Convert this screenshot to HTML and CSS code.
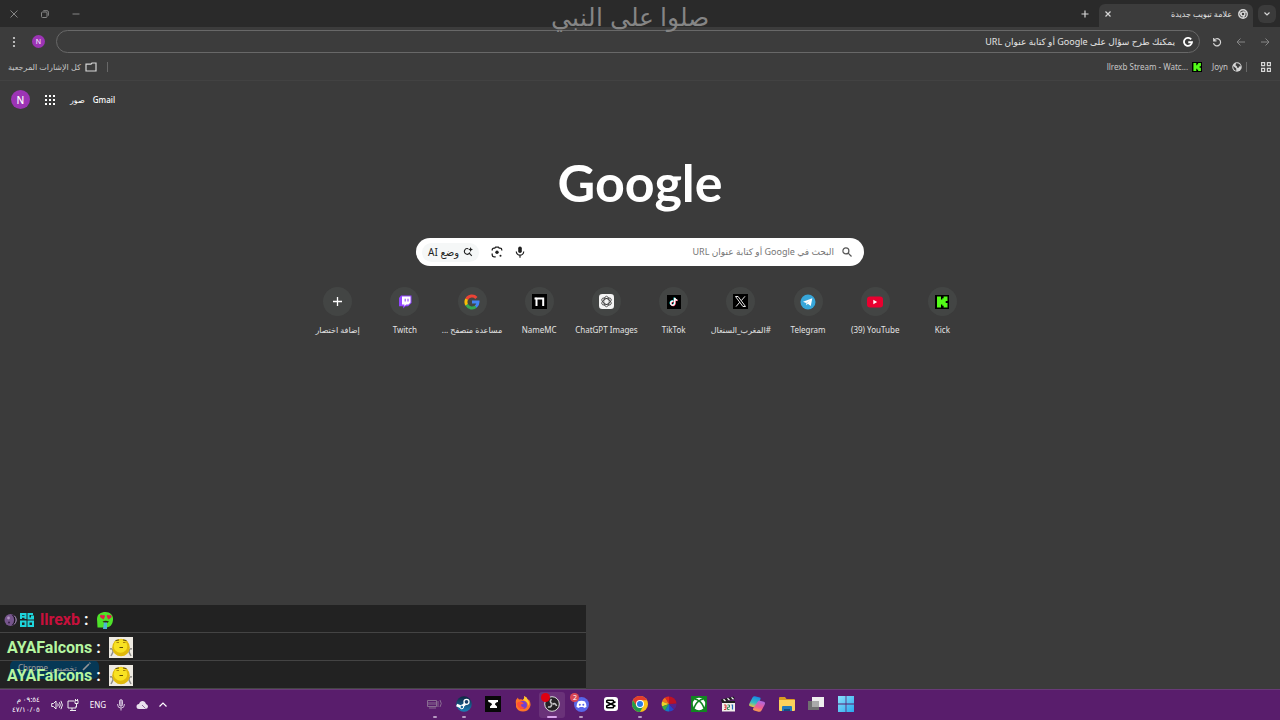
FILE: index.html
```
<!DOCTYPE html>
<html lang="ar" dir="rtl">
<head>
    <meta charset="utf-8">
    <title>علامة تبويب جديدة</title>
    <link rel="stylesheet" href="styles.css">
</head>
<body>
    <!-- Tab strip -->
    <header class="tab-strip">
        <button class="tab-search" aria-label="البحث في علامات التبويب">
            <svg width="8" height="8" viewBox="0 0 8 8" class="line"><path d="M1.5 2.5 4 5l2.5-2.5"/></svg>
        </button>
        <div class="tab">
            <svg width="10" height="10" viewBox="0 0 20 20" fill="none" stroke="#d6d6d6" stroke-width="2.8"><circle cx="10" cy="10" r="8.5"/><circle cx="10" cy="10" r="3.8"/><path d="M10 6.2h8M6.7 12 2.6 5.5M13.3 12 9.5 18.5"/></svg>
            <span class="tab-title">علامة تبويب جديدة</span>
            <button class="tab-close" aria-label="إغلاق">
                <svg width="8" height="8" viewBox="0 0 8 8" class="line"><path d="M1.5 1.5l5 5M6.5 1.5l-5 5"/></svg>
            </button>
        </div>
        <button class="new-tab" aria-label="علامة تبويب جديدة">
            <svg width="8" height="8" viewBox="0 0 8 8" class="line"><path d="M4 .5v7M.5 4h7"/></svg>
        </button>
        <div class="window-controls">
            <button aria-label="تصغير"><svg width="8" height="8" viewBox="0 0 8 8" class="line dim"><path d="M.5 4h7"/></svg></button>
            <button aria-label="استعادة"><svg width="8" height="8" viewBox="0 0 8 8" class="line dim"><rect x=".5" y="2" width="5.5" height="5.5" rx="1"/><path d="M2.3 .7h3.7q1.4 0 1.4 1.4v3.6"/></svg></button>
            <button aria-label="إغلاق النافذة"><svg width="8" height="8" viewBox="0 0 8 8" class="line dim"><path d="M.5 .5l7 7M7.5 .5l-7 7"/></svg></button>
        </div>
    </header>

    <!-- Toolbar -->
    <nav class="toolbar">
        <button class="tool" aria-label="التالي"><svg width="10" height="10" viewBox="0 0 10 10" class="line dim"><path d="M1 5h8M5.5 1.5 9 5 5.5 8.5"/></svg></button>
        <button class="tool" aria-label="السابق"><svg width="10" height="10" viewBox="0 0 10 10" class="line dim"><path d="M9 5H1M4.5 1.5 1 5l3.5 3.5"/></svg></button>
        <button class="tool" aria-label="إعادة التحميل"><svg width="10" height="10" viewBox="0 0 10 10" class="line"><path d="M1.7 1v2.8h2.8M1.8 3.6A3.6 3.6 0 1 1 1.5 6.2"/></svg></button>
        <div class="omnibox">
            <svg width="10" height="10" viewBox="0 0 20 20" fill="none" stroke="#fff" stroke-width="3.6"><path d="M16.3 4.8A8 8 0 1 0 18 10.5h-7.5"/></svg>
            <input type="text" aria-label="شريط العناوين" placeholder="يمكنك طرح سؤال على Google أو كتابة عنوان URL">
        </div>
        <button class="avatar avatar-small" aria-label="الملف الشخصي">N</button>
        <button class="tool" aria-label="القائمة"><svg width="4" height="12" viewBox="0 0 4 12" fill="#d6d6d6"><circle cx="2" cy="2" r="1.1"/><circle cx="2" cy="6" r="1.1"/><circle cx="2" cy="10" r="1.1"/></svg></button>
    </nav>

    <!-- Bookmarks bar -->
    <nav class="bookmarks">
        <button class="tool" aria-label="التطبيقات"><svg width="10" height="10" viewBox="0 0 10 10" class="line"><path d="M.6.6h3v3h-3zM6.4.6h3v3h-3zM.6 6.4h3v3h-3zM6.4 6.4h3v3h-3z"/></svg></button>
        <span class="divider"></span>
        <a href="#" class="bookmark">
            <svg width="10" height="10" viewBox="0 0 20 20"><circle cx="10" cy="10" r="9.5" fill="#d6d6d6"/><path d="M2.5 8l6 5v4.8C4.5 17 2 13.5 2.5 8zM8 2.5c5-1 9 2 9.7 6l-3.7.5-1 3-3-1-.5-3L7 7z" fill="#3c3c3c"/></svg>
            Joyn
        </a>
        <a href="#" class="bookmark">
            <svg width="10" height="10" viewBox="0 0 14 14"><path fill="#000" d="M0 0h14v14H0z"/><path fill="#53fc18" d="M2 1.500h4v3h1.300V3.200h1.300V1.500H12.500v4.500h-1.800v2h1.800v4.500H8.600v-1.700H7.300V9.500H6v3H2z"/></svg>
            <bdi>llrexb Stream - Watc...</bdi>
        </a>
        <span class="spacer"></span>
        <span class="divider"></span>
        <button class="bookmark all-bookmarks">
            <svg width="12" height="10" viewBox="0 0 12 10" class="line"><path d="M1 2.2h5l1-1.2h4v8H1z"/></svg>
            كل الإشارات المرجعية
        </button>
    </nav>

    <main class="ntp">
        <div class="ntp-links">
            <a href="#">Gmail</a>
            <a href="#">صور</a>
            <button class="tool" aria-label="تطبيقات Google"><svg width="10" height="10" viewBox="0 0 10 10" fill="#fff"><path d="M0 0h2v2H0zM4 0h2v2H4zM8 0h2v2H8zM0 4h2v2H0zM4 4h2v2H4zM8 4h2v2H8zM0 8h2v2H0zM4 8h2v2H4zM8 8h2v2H8z"/></svg></button>
            <button class="avatar" aria-label="حساب Google">N</button>
        </div>

        <h1 class="logo">Google</h1>

        <form class="search" action="javascript:void(0);">
            <svg width="10" height="10" viewBox="0 0 10 10" fill="none" stroke="#555" stroke-width="1.2"><circle cx="3.9" cy="3.9" r="3"/><path d="M6.2 6.2 9.5 9.5"/></svg>
            <input type="text" aria-label="البحث" placeholder="البحث في Google أو كتابة عنوان URL">
            <button aria-label="البحث الصوتي"><svg width="10" height="12" viewBox="0 0 10 12"><rect x="3.2" y=".5" width="3.6" height="6.5" rx="1.8" fill="#1f1f1f"/><path d="M1.3 5.5a3.7 3.7 0 0 0 7.4 0M5 9.2v2.6" fill="none" stroke="#1f1f1f" stroke-width="1.2"/></svg></button>
            <button aria-label="البحث بالصور"><svg width="12" height="12" viewBox="0 0 12 12" fill="none" stroke="#1f1f1f" stroke-width="1.3"><path d="M1.2 4.5V4q0-1.8 1.8-1.8h.8l.8-1h2.8l.8 1H9q1.8 0 1.8 1.800v.5M1.2 7.5V9q0 1.8 1.8 1.8h1.7"/><circle cx="6" cy="6.3" r="1.7" fill="#1f1f1f" stroke="none"/><circle cx="9.5" cy="9.8" r="1" fill="#1f1f1f" stroke="none"/></svg></button>
            <button class="ai-mode">
                <svg width="10" height="10" viewBox="0 0 10 10" fill="none" stroke="#1f1f1f" stroke-width="1.1"><path d="M5.3 1.8A2.8 2.8 0 1 0 6.8 5.6M6.2 6.2 8.8 8.8"/><path d="M7.6 0l.7 1.8 1.7.7-1.7.7-.7 1.8-.7-1.8-1.700-.7 1.700-.7z" fill="#1f1f1f" stroke="none"/></svg>
                وضع AI
            </button>
        </form>

        <div class="shortcuts">
            <a href="#" class="shortcut">
                <span class="circle"><svg width="14" height="14" viewBox="0 0 14 14"><path fill="#000" d="M0 0h14v14H0z"/><path fill="#53fc18" d="M2 1.500h4v3h1.300V3.200h1.300V1.500H12.500v4.500h-1.800v2h1.800v4.500H8.600v-1.700H7.300V9.500H6v3H2z"/></svg></span>
                <bdi>Kick</bdi>
            </a>
            <a href="#" class="shortcut">
                <span class="circle"><svg width="16" height="12" viewBox="0 0 16 12"><rect y=".5" width="16" height="11" rx="3" fill="#e9002f"/><path d="M6.3 3.7v4.6L10.2 6z" fill="#fff"/></svg></span>
                <bdi>(39) YouTube</bdi>
            </a>
            <a href="#" class="shortcut">
                <span class="circle"><svg width="16" height="16" viewBox="0 0 16 16"><circle cx="8" cy="8" r="7.5" fill="#37a6d9"/><path d="M3 7.8 12.3 4.2 10.8 12 7.8 9.8 6.4 11.2 6 8.9z" fill="#fff"/><path d="M6 8.9 10.5 5.9 7.1 9.3 6.4 11.2z" fill="#b8d9ea"/></svg></span>
                <bdi>Telegram</bdi>
            </a>
            <a href="#" class="shortcut">
                <span class="circle"><svg width="15" height="15" viewBox="0 0 15 15"><path fill="#000" d="M0 0h15v15H0z"/><path d="M2.5 2.5h2.6l7.4 10H9.9zM12 2.3 8.3 6.6M6.7 8.3 3 12.6" fill="none" stroke="#fff" stroke-width=".9"/></svg></span>
                <bdi>#المغرب_السنغال</bdi>
            </a>
            <a href="#" class="shortcut">
                <span class="circle"><svg width="14" height="14" viewBox="0 0 14 14"><path fill="#000" d="M0 0h14v14H0z"/><g fill="none" stroke-width="1.4"><path d="M6.4 6.3a2 2 0 1 0 1.3 2V2.9q.4 2 2.6 2.3" stroke="#25f4ee" transform="translate(-.5 -.3)"/><path d="M6.4 6.3a2 2 0 1 0 1.3 2V2.9q.4 2 2.6 2.3" stroke="#fe2c55" transform="translate(.4 .4)"/><path d="M6.4 6.3a2 2 0 1 0 1.3 2V2.9q.4 2 2.6 2.3" stroke="#fff"/></g></svg></span>
                <bdi>TikTok</bdi>
            </a>
            <a href="#" class="shortcut">
                <span class="circle"><svg width="15" height="15" viewBox="0 0 16 16"><rect width="16" height="16" rx="3.5" fill="#f4f4f4"/><g fill="none" stroke="#333" stroke-width=".8"><ellipse cx="8" cy="8" rx="2.9" ry="5.6"/><ellipse cx="8" cy="8" rx="2.9" ry="5.6" transform="rotate(60 8 8)"/><ellipse cx="8" cy="8" rx="2.9" ry="5.6" transform="rotate(120 8 8)"/></g></svg></span>
                <bdi>ChatGPT Images</bdi>
            </a>
            <a href="#" class="shortcut">
                <span class="circle"><svg width="15" height="15" viewBox="0 0 15 15"><path fill="#000" d="M0 0h15v15H0z"/><path d="M4.500 12V4.500H11.200v7.500" fill="none" stroke="#fff" stroke-width="2"/><path fill="#fff" d="M2.500 3.500h2v2h-2z"/></svg></span>
                <bdi>NameMC</bdi>
            </a>
            <a href="#" class="shortcut">
                <span class="circle"><svg width="16" height="16" viewBox="0 0 16 16" fill="none" stroke-width="3"><path d="M2.7 5.2A6 6 0 0 1 12.4 4" stroke="#ea4335"/><path d="M2.8 11A6 6 0 0 1 2.7 5.1" stroke="#fbbc05"/><path d="M12 12.5A6 6 0 0 1 2.7 10.8" stroke="#34a853"/><path d="M8 8h6a6 6 0 0 1-2.2 4.6" stroke="#4285f4"/></svg></span>
                <bdi>مساعدة متصفح ...</bdi>
            </a>
            <a href="#" class="shortcut">
                <span class="circle"><svg width="14" height="14" viewBox="0 0 14 14"><path d="M3 .5h10.5V8L10 11.2H7.5L5.2 13.5v-2.3H1V3z" fill="#9146ff"/><path d="M4 1.5h8.5v6l-2 2H8.2L6.4 11.2V9.5H4z" fill="#fff"/><path d="M7.2 3.8v2.7M10 3.8v2.7" stroke="#9146ff" stroke-width="1.1"/></svg></span>
                <bdi>Twitch</bdi>
            </a>
            <button class="shortcut">
                <span class="circle"><svg width="9" height="9" viewBox="0 0 9 9" fill="none" stroke="#fff" stroke-width="1.3"><path d="M4.5 0v9M0 4.5h9"/></svg></span>
                <bdi>إضافة اختصار</bdi>
            </button>
        </div>

        <button class="customize">
            <svg width="9" height="9" viewBox="0 0 9 9" fill="none" stroke="#fff" stroke-width="1.6"><path d="M1 8 7 2M7.5 1.5 8.3.7"/></svg>
            تخصيص Chrome
        </button>
    </main>

    <!-- Stream overlays -->
    <p class="banner">صلوا على النبي</p>

    <section class="chat" dir="ltr">
        <div class="chat-row">
            <span class="badges">
                <svg width="13" height="14" viewBox="0 0 13 14"><circle cx="6.5" cy="7" r="6" fill="#76558c"/><path d="M7.5 1.5a5.7 5.7 0 0 1 0 11 7 7 0 0 0 0-11z" fill="#19131f"/><path d="M10.500 3a5.500 5.500 0 0 1 0 8" fill="none" stroke="#9d8cac"/><circle cx="4.5" cy="5" r="1.4" fill="#b295c4"/><circle cx="5" cy="9.5" r="1" fill="#392148"/></svg>
                <svg width="14" height="14" viewBox="0 0 14 14" fill="none" stroke="#1ed5dc" stroke-width="2"><path d="M1 6V1h4.5v5M1 3.8h4.5M13 1H8.5v4.5H13V3.5h-2M1 8.5h4.5V13H1zM8.5 8.5H13V13H8.5z"/></svg>
            </span>
            <span class="user user-red">llrexb</span><span class="colon">:</span>
            <svg width="18" height="18" viewBox="0 0 18 18"><path d="M1 8C1 3 5 1 9.5 1S17.5 4 17 9s-3 7.5-8 7.5H1.5z" fill="#4fe32a"/><path d="M7 4.5C5 2.5 3 5 4.5 6.5L7.5 8.5 9 5.5C8.7 3.8 7.5 3.8 7 4.5zM13 4.5C12 3 10.5 3.8 10.8 5.5L12.3 8.5l3-2C16.5 4.5 14.3 3 13 4.5z" fill="#e21d4b"/><path d="M6.5 10.5q3-1.5 6.5 0-3 3-6.5 0z" fill="#302a18"/><path d="M8 11.5h3V18H7z" fill="#4ab6d5"/></svg>
        </div>
        <div class="chat-row">
            <span class="user user-green">AYAFalcons</span><span class="colon">:</span>
            <svg width="24" height="21" viewBox="0 0 24 21"><path fill="#eeeae2" d="M0 0h24v21H0z"/><path d="M1 12q3-1 3 3l-2 4M23 12q-3-1-3 3l2 4" fill="none" stroke="#8f8d8a" stroke-width="1.5"/><circle cx="12" cy="10.5" r="8.8" fill="#e0b90b"/><circle cx="11.5" cy="9" r="6.8" fill="#f8e222"/><path d="M6.5 3.5 10 3M14 3l3.5.5M10.500 10.5h3.5" fill="none" stroke="#5c4908" stroke-width="1.2"/><path d="M7.5 5.500h2.5M14 5.500h2.5" stroke="#a9850b"/></svg>
        </div>
        <div class="chat-row">
            <span class="user user-green">AYAFalcons</span><span class="colon">:</span>
            <svg width="24" height="21" viewBox="0 0 24 21"><path fill="#eeeae2" d="M0 0h24v21H0z"/><path d="M1 12q3-1 3 3l-2 4M23 12q-3-1-3 3l2 4" fill="none" stroke="#8f8d8a" stroke-width="1.5"/><circle cx="12" cy="10.5" r="8.8" fill="#e0b90b"/><circle cx="11.5" cy="9" r="6.8" fill="#f8e222"/><path d="M6.5 3.5 10 3M14 3l3.5.5M10.500 10.5h3.5" fill="none" stroke="#5c4908" stroke-width="1.2"/><path d="M7.5 5.500h2.5M14 5.500h2.5" stroke="#a9850b"/></svg>
        </div>
    </section>

    <!-- Taskbar -->
    <footer class="taskbar">
        <div class="apps">
            <button class="app" aria-label="ابدأ"><svg viewBox="0 0 16 16"><defs><linearGradient id="win" x2="1" y2="1"><stop stop-color="#8be0fb"/><stop offset="1" stop-color="#2ba8ee"/></linearGradient></defs><path fill="url(#win)" d="M0 0h7.6v7.6H0zM8.4 0H16v7.6H8.4zM0 8.4h7.6V16H0zM8.4 8.4H16V16H8.4z"/></svg></button>
            <button class="app" aria-label="عرض المهام"><svg viewBox="0 0 16 16"><path fill="#eee" d="M4 1h12v10H4z"/><path fill="#707070" d="M0 5h11v9H0z"/><path fill="#aaa" d="M4 5h7v6H4z"/></svg></button>
            <button class="app" aria-label="مستكشف الملفات"><svg viewBox="0 0 16 16"><path fill="#d99c22" d="M0 2q0-1 1-1h5l1.5 2H15q1 0 1 1v5H0z"/><path fill="#fbd15c" d="M0 4h16v10q0 1-1 1H1q-1 0-1-1z"/><path fill="#2079bd" d="M3 15v-4q0-1 1-1h8q1 0 1 1v4z"/><path fill="#134c80" d="M5 13h6v2H5z"/></svg></button>
            <button class="app" aria-label="Copilot"><svg viewBox="0 0 16 16"><defs><linearGradient id="cop1" y2="1" x2="0"><stop stop-color="#1689e4"/><stop offset=".6" stop-color="#38bcc0"/><stop offset="1" stop-color="#e9c63e"/></linearGradient><linearGradient id="cop2" y2="1" x2="0"><stop stop-color="#aa68e3"/><stop offset=".6" stop-color="#ef5b93"/><stop offset="1" stop-color="#f8a14c"/></linearGradient></defs><g transform="rotate(15 8 8)"><path fill="url(#cop1)" d="M4 1h5q1.5 0 1 2L8 10q-.5 2-2.5 2H2Q0 12 .7 9L2 3q.5-2 2-2z"/><path fill="url(#cop2)" d="M10 4h4q2 0 1.5 3L14 13q-.5 2-2.5 2H7q-2 0-1.5-2L8 6q.6-2 2-2z"/></g></svg></button>
            <button class="app" aria-label="مشغل الوسائط"><svg viewBox="0 0 16 16"><path fill="#f1eee9" d="M2 6h13v9.5H2z"/><path fill="#202020" d="M1 3.5 14 .5l.6 2.5L1.6 6zM2 5h13v2H2z"/><path d="M3.5 3.2l2 1.8M7.5 2.3l2 1.8M11.5 1.4l2 1.8" stroke="#fff" stroke-width="1.2"/><path d="M4 9h2v4.5H4M6 11.2H4.5" stroke="#d53838" fill="none"/><path d="M7.5 9h2v2.2h-2v2.3h2" stroke="#338b5a" fill="none"/><path d="M11.5 9h1v4.5" stroke="#2468bc" stroke-width="1.2" fill="none"/></svg></button>
            <button class="app" aria-label="Xbox"><svg viewBox="0 0 16 16"><path fill="#128521" d="M0 0h16v16H0z"/><circle cx="8" cy="8" r="6.2" fill="#fff"/><path d="M3.5 3.5Q5.5 2.5 8 5q2.5-2.5 4.5-1.5M8 5C6 6 3.5 9.5 3.2 12.5M8 5c2 1 4.5 4.5 4.8 7.5" stroke="#128521" stroke-width="1.5" fill="none"/></svg></button>
            <button class="app" aria-label="الألوان"><svg viewBox="0 0 16 16"><path fill="#e42920" d="M8 8 4 1.5A7.5 7.5 0 0 1 8 .5z"/><path fill="#f47419" d="M8 8 1 5.5A7.5 7.5 0 0 1 4 1.5z"/><path fill="#ecd127" d="M8 8 1 10.5A7.5 7.5 0 0 1 1 5.5z"/><path fill="#38ab44" d="M8 8 4 14.5A7.5 7.5 0 0 1 1 10.5z"/><path fill="#147cc0" d="M8 8v7.5a7.5 7.5 0 0 1-4-1z"/><path fill="#2545c9" d="M8 8l5 5.5a7.5 7.5 0 0 1-5 2z"/><path fill="#57238c" d="M8 8l7.5-.5A7.5 7.5 0 0 1 13 13.5z"/><path fill="#bc1226" d="M8 8V.5a7.5 7.5 0 0 1 7.5 7z"/></svg></button>
            <button class="app running" aria-label="Google Chrome"><svg viewBox="0 0 16 16"><circle cx="8" cy="8" r="8" fill="#fbc116"/><path fill="#e33b2e" d="M1 4.2A8 8 0 0 1 15 4.2H8L4.7 10z"/><path fill="#24994a" d="M1 4.2 4.6 10 8 11.5 11.3 10 8 16A8 8 0 0 1 1 4.2z"/><circle cx="8" cy="8" r="4" fill="#fff"/><circle cx="8" cy="8" r="3" fill="#287be8"/></svg></button>
            <button class="app" aria-label="CapCut"><svg viewBox="0 0 16 16"><rect x="1" y="1" width="14" height="14" rx="3" fill="#fff"/><path d="M10.5 6V5q0-.8-.8-.8H4.5q-.8 0-.8.8v1L12.5 10.2M10.5 10v1q0 .8-.8.8H4.5q-.8 0-.8-.8v-1L12.5 5.8" stroke="#000" stroke-width="1.5" fill="none"/></svg></button>
            <button class="app running" aria-label="Discord"><svg viewBox="0 0 16 16"><circle cx="8.5" cy="8.5" r="7.5" fill="#5865e9"/><path d="M5 5.5q3.5-1.5 7 0 1.7 2.5 1.5 5.5l-2.5 1-.7-1H6.7l-.7 1-2.5-1Q3.5 8 5 5.5z" fill="#fff"/><circle cx="6.8" cy="8.8" r="1" fill="#5865e9"/><circle cx="10.3" cy="8.8" r="1" fill="#5865e9"/></svg><span class="count">2</span></button>
            <button class="app running active" aria-label="OBS Studio"><svg viewBox="0 0 16 16"><circle cx="8" cy="8" r="7.3" fill="#242125" stroke="#ddd" stroke-width="1"/><g fill="none" stroke="#c6c4c8" stroke-width="1.6"><path d="M8 7.5Q5 6 7.5 3"/><path d="M8 7.5Q5 6 7.5 3" transform="rotate(120 8 8)"/><path d="M8 7.5Q5 6 7.5 3" transform="rotate(240 8 8)"/></g></svg><span class="rec"></span></button>
            <button class="app" aria-label="Firefox"><svg viewBox="0 0 16 16"><path fill="#ff7426" d="M1 8Q0 4 3 1.5q0 2 1.5 2Q7 3 8 4q2-1.5 1-4 3 1 4 4l1-.5Q16.5 8 15 11q-2 4.5-7 4.5T1 11z"/><path fill="#ffc62d" d="M9 0q3 1 4 4 2 3 1 6-2-5-6-6 2-1.5 1-4z"/><circle cx="8" cy="9" r="4" fill="#7342cf"/><path fill="#ff4e38" d="M2 7q2-2 5-1l2 1.5-3 1q0 3 3.5 3Q8 14 5 12.5 2 11 2 7z"/></svg></button>
            <button class="app" aria-label="Anvil"><svg viewBox="0 0 16 16"><path fill="#080808" d="M0 0h16v16H0z"/><path fill="#fff" d="M3 4h10v2q-3 .5-3 2.5l2 2V12H5v-1.5l2-2Q7 7 3.5 6z"/></svg></button>
            <button class="app running" aria-label="Steam"><svg viewBox="0 0 16 16"><defs><linearGradient id="steam" x2="0" y2="1"><stop stop-color="#102540"/><stop offset="1" stop-color="#1b7fb8"/></linearGradient></defs><circle cx="8" cy="8" r="7.8" fill="url(#steam)"/><path d="M.6 9 5.500 11 10 7" stroke="#fff" stroke-width="2.8" fill="none"/><circle cx="10.5" cy="5.800" r="2.5" fill="#17406a" stroke="#fff" stroke-width="1.3"/><circle cx="5.8" cy="11" r="1.800" fill="#1b6a9e" stroke="#fff"/></svg></button>
            <button class="app running" aria-label="الصوت"><svg viewBox="0 0 16 16" fill="none" stroke="#8f7596" stroke-width=".9"><path d="M.5 4.5h9v6h-9zM2 6v3M4 6v3M6 6v3M8 6v3M11 5v6M13 4q2.5 3.5 0 7M2 12h7"/></svg></button>
        </div>
        <div class="tray">
            <button aria-label="الرموز المخفية"><svg width="8" height="8" viewBox="0 0 8 8" fill="none" stroke="#fff" stroke-width="1.2"><path d="M.5 5.5 4 2l3.5 3.5"/></svg></button>
            <button aria-label="OneDrive"><svg width="12" height="10" viewBox="0 0 12 10"><path d="M3 9Q.5 9 .5 6.5T3 4Q4 1 6.5 1T10 4q2 .5 2 2.5T9.5 9z" fill="#e9e2ed"/><path d="M6 5 9.5 8.5" stroke="#8e6e9b"/></svg></button>
            <button aria-label="ميكروفون"><svg width="8" height="12" viewBox="0 0 8 12" fill="none" stroke="#d5c5dc"><rect x="2.5" y=".7" width="3" height="6.5" rx="1.5" fill="#a98bb6"/><path d="M.7 5v1q0 3 3.3 3t3.3-3V5M4 9v2.5"/></svg></button>
            <button class="language">ENG</button>
            <button class="status" aria-label="الشبكة والصوت">
                <svg width="12" height="12" viewBox="0 0 12 12" fill="none" stroke="#eee"><path d="M7 2H1v7h8V7M3 11.5h6M5 9v2.5M8 1.5h3v3H8zM9.5 4.5V8M8.5 0v1.5M10.5 0v1.5"/></svg>
                <svg width="12" height="10" viewBox="0 0 12 10" fill="none" stroke="#eee"><path d="M.7 3.5h1.8L5 1v8L2.5 6.5H.7zM6.7 3.5q1 1.5 0 3M8.3 2.2q2 2.8 0 5.6M9.9.8q3 4.2 0 8.4"/></svg>
            </button>
            <time class="clock">٠٩:٥٤ م<br>٤٧/١٠/٠٥</time>
        </div>
    </footer>
</body>
</html>
```
FILE: styles.css
```
* {
    box-sizing: border-box;
}

body {
    display: flex;
    flex-direction: column;
    min-height: 100vh;
    margin: 0;
    background: #3b3b3b;
    color: #e3e3e3;
    font: 8px/12px "Noto Sans", "DejaVu Sans", sans-serif;
}

button,
input {
    padding: 0;
    border: 0;
    background: none;
    color: inherit;
    font: inherit;
}

input:focus {
    outline: none;
}

a {
    color: inherit;
    text-decoration: none;
}

svg {
    display: block;
    flex: none;
}

.line {
    fill: none;
    stroke: #d6d6d6;
    stroke-width: 1.2;
}

.dim {
    stroke: #858585;
    stroke-width: 1;
}

.spacer {
    flex: 1;
}

.divider {
    width: 1px;
    height: 10px;
    background: #686868;
}

.tool {
    display: flex;
    align-items: center;
    justify-content: center;
    width: 12px;
    height: 12px;
}

/* Tab strip */
.tab-strip {
    display: flex;
    align-items: center;
    height: 27px;
    padding: 0 4px;
    background: #2a2a2a;
}

.tab-search {
    display: flex;
    align-items: center;
    justify-content: center;
    width: 18px;
    height: 18px;
    border-radius: 6px;
    background: #3b3b3b;
}

.tab {
    display: flex;
    align-items: center;
    align-self: flex-end;
    gap: 6px;
    width: 154px;
    height: 23px;
    margin-right: 5px;
    padding: 0 5px 4px;
    border-radius: 6px 6px 0 0;
    background: #3c3c3c;
}

.tab-title {
    flex: 1;
}

.new-tab {
    margin-right: 10px;
}

.window-controls {
    display: flex;
    gap: 23px;
    margin-right: auto;
    padding-left: 6px;
}

/* Toolbar */
.toolbar {
    display: flex;
    align-items: center;
    gap: 12px;
    height: 29px;
    padding: 0 9px 0 8px;
    background: #3c3c3c;
}

.omnibox {
    display: flex;
    flex: 1;
    align-items: center;
    gap: 8px;
    height: 23px;
    margin: 0 -1px;
    padding: 0 6px;
    border: 1px solid #686868;
    border-radius: 12px;
}

.omnibox input {
    flex: 1;
    font-size: 9px;
}

.omnibox input::placeholder {
    color: #e3e3e3;
}

.avatar {
    width: 19px;
    height: 19px;
    border-radius: 50%;
    background: #9c34b5;
    color: #fff;
    font-size: 10px;
}

.avatar-small {
    width: 13px;
    height: 13px;
    font-size: 7px;
    line-height: 13px;
}

/* Bookmarks bar */
.bookmarks {
    display: flex;
    align-items: center;
    gap: 10px;
    height: 25px;
    padding: 0 8px 3px;
    border-bottom: 1px solid #424242;
    background: #3c3c3c;
}

.bookmarks .tool + .divider {
    margin: 0 3px 0 -6px;
}

.bookmark {
    display: flex;
    align-items: center;
    gap: 4px;
    color: #c7c7c7;
}

/* New tab page */
.ntp {
    position: relative;
    display: flex;
    flex: 1;
    flex-direction: column;
    align-items: center;
}

.ntp-links {
    display: flex;
    align-items: center;
    align-self: flex-end;
    gap: 8px;
    height: 19px;
    margin-top: 9px;
    padding-left: 11px;
    color: #fff;
    font-weight: 500;
}

.ntp-links .tool {
    margin: 0 6px;
}

.logo {
    margin: 37px 0 0;
    color: #fff;
    font: 700 52px/72px Lato, sans-serif;
}

.search {
    display: flex;
    align-items: center;
    gap: 12px;
    width: 448px;
    max-width: 100%;
    height: 28px;
    margin-top: 20px;
    padding: 0 12px 0 6px;
    border-radius: 14px;
    background: #fff;
    color: #1f1f1f;
}

.search input {
    flex: 1;
    margin-right: -4px;
    font-size: 9px;
}

.search input::placeholder {
    color: #757575;
}

.ai-mode {
    display: flex;
    align-items: center;
    gap: 4px;
    height: 19px;
    padding: 0 6px;
    border-radius: 10px;
    background: #f5f7f7;
    font-size: 10px;
}

.shortcuts {
    display: grid;
    grid-template-columns: repeat(10, 1fr);
    width: 672px;
    max-width: 100%;
    margin-top: 21px;
}

.shortcut {
    display: flex;
    flex-direction: column;
    align-items: center;
    gap: 8px;
    white-space: nowrap;
}

.circle {
    display: flex;
    align-items: center;
    justify-content: center;
    width: 29px;
    height: 29px;
    border-radius: 50%;
    background: #434544;
}

.customize {
    position: absolute;
    bottom: 10px;
    left: 10px;
    display: flex;
    align-items: flex-start;
    gap: 5px;
    height: 19px;
    padding: 2px 8px 0;
    border-radius: 6px;
    background: #0b5f93;
    color: #fff;
}

/* Stream overlays */
.banner {
    position: absolute;
    top: 0;
    left: 0;
    width: 100%;
    margin: 0;
    padding: 2px 20px 0 0;
    color: #858585;
    font: 25px/32px "Liberation Serif", serif;
    text-align: center;
    pointer-events: none;
}

.chat {
    position: absolute;
    bottom: 31px;
    left: 0;
    width: 586px;
    max-width: 100%;
    font: 700 16px/20px Roboto, sans-serif;
}

.chat-row {
    display: flex;
    align-items: center;
    height: 28px;
    padding: 2px 7px 0;
    border-bottom: 1px solid #444;
    background: rgba(0, 0, 0, .41);
}

.badges {
    display: flex;
    gap: 3px;
    margin: 0 6px 0 -3px;
}

.user-red {
    color: #c8103c;
}

.user-green {
    color: #b5f5a0;
}

.colon {
    margin: 0 8px 0 4px;
    color: #fff;
}

/* Taskbar */
.taskbar {
    display: grid;
    grid-template-columns: 1fr auto 1fr;
    align-items: center;
    height: 31px;
    border-top: 1px solid #693a78;
    background: #591d6c;
    color: #fff;
}

.apps {
    display: flex;
    grid-column: 2;
    justify-content: space-between;
    width: 437px;
}

.app {
    position: relative;
    display: flex;
    align-items: center;
    justify-content: center;
    width: 26px;
    height: 26px;
    padding-bottom: 2px;
    border-radius: 3px;
}

.app svg {
    width: 16px;
    height: 16px;
}

.active {
    background: #6a3279;
}

.running::after {
    content: "";
    position: absolute;
    bottom: 0;
    width: 4px;
    height: 2px;
    border-radius: 1px;
    background: #b79ac2;
}

.active::after {
    width: 10px;
    background: #dba5ec;
}

.count,
.rec {
    position: absolute;
    top: 1px;
    left: 2px;
    width: 9px;
    height: 9px;
    border-radius: 50%;
    background: #d84655;
    font-size: 7px;
    line-height: 9px;
}

.rec {
    background: #df0011;
}

.tray {
    display: flex;
    align-items: center;
    justify-content: flex-end;
    gap: 11px;
    padding-left: 12px;
}

.status {
    display: flex;
    align-items: center;
    gap: 4px;
}

.clock {
    font-size: 7px;
    line-height: 10px;
}
```
